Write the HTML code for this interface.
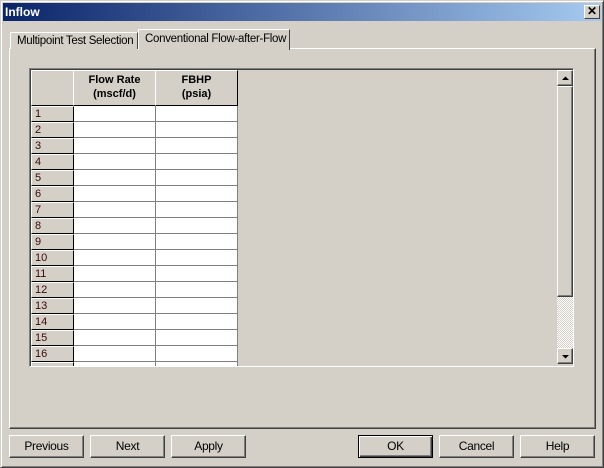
<!DOCTYPE html>
<html><head><style>
*{margin:0;padding:0;box-sizing:border-box}
body{width:604px;height:468px;background:#d4d0c8;font-family:"Liberation Sans",sans-serif;font-size:11px;position:relative;overflow:hidden}
.a{position:absolute}
.title{left:3px;top:3px;width:598px;height:18px;background:linear-gradient(90deg,#0a246a,#a6caf0);color:#fff;font-weight:bold;font-size:12px;padding:2px 0 0 2px}
.xb{right:4px;top:5px;width:16px;height:14px;background:#d4d0c8;border:1px solid;border-color:#fff #404040 #404040 #fff;font-size:12px;font-weight:bold;line-height:11px;text-align:center;color:#000}
.tab{background:#d4d0c8;border:1px solid;border-color:#fff #404040 transparent #fff;border-bottom:none;font-size:11.5px;letter-spacing:-0.3px;padding-left:6px;white-space:nowrap}
.panel{left:9px;top:48px;width:587px;height:381px;border:1px solid;border-color:#fff #404040 #404040 #fff;box-shadow:inset -1px -1px #808080}
.frame{left:29px;top:68px;width:545px;height:299px;border:1px solid;border-color:#808080 #fff #fff #808080;box-shadow:inset 1px 1px #404040;background:#d4d0c8;overflow:hidden}
.hd{background:#d4d0c8;border:1px solid;border-color:#fff #000 #000 #fff;font-weight:bold;text-align:center;line-height:14px;padding-top:2px;color:#000}
.rh{background:#d4d0c8;border:1px solid;border-color:#fff #000 #000 #fff;color:#3a0a0a;padding-left:3px;line-height:14px;font-size:11px}
.c{background:#fff;border-right:1px solid #808080;border-bottom:1px solid #808080}
.sbtn{background:#d4d0c8;border:1px solid;border-color:#fff #404040 #404040 #fff;box-shadow:inset -1px -1px #808080}
.btn{top:435px;height:23px;width:75px;background:#d4d0c8;border:1px solid;border-color:#fff #404040 #404040 #fff;box-shadow:inset -1px -1px #808080;text-align:center;line-height:20px;font-size:12px;letter-spacing:-0.3px}
</style></head><body>
<div class="a" style="left:0;top:0;width:604px;height:468px;border:1px solid;border-color:#d4d0c8 #404040 #404040 #d4d0c8;box-shadow:inset 1px 1px #fff,inset -1px -1px #808080"></div>
<div class="a title">Inflow</div>
<div class="a xb">✕</div>
<div class="a panel"></div>
<div class="a tab" style="left:10px;top:32px;width:128px;height:17px;line-height:17px">Multipoint Test Selection</div>
<div class="a tab" style="left:138px;top:29px;width:152px;height:21px;line-height:19px;z-index:2">Conventional Flow-after-Flow</div>
<div class="a frame">
 <div class="a hd" style="left:1px;top:1px;width:43px;height:36px"></div>
 <div class="a hd" style="left:43px;top:1px;width:83px;height:36px">Flow Rate<br>(mscf/d)</div>
 <div class="a hd" style="left:125px;top:1px;width:83px;height:36px">FBHP<br>(psia)</div>
 <div id="rows"></div>
 <div class="a sbtn" style="left:527px;top:1px;width:16px;height:16px"><svg width="14" height="14" style="position:absolute;left:0;top:0"><path d="M4 9h7L7.5 5.5z" fill="#000"/></svg></div>
 <div class="a sbtn" style="left:527px;top:17px;width:16px;height:211px"></div>
 <div class="a" style="left:527px;top:228px;width:16px;height:51px;background:repeating-conic-gradient(#fff 0 25%,#d4d0c8 0 50%) 0 0/2px 2px"></div>
 <div class="a sbtn" style="left:527px;top:279px;width:16px;height:16px"><svg width="14" height="14" style="position:absolute;left:0;top:0"><path d="M4 6h7L7.5 9.5z" fill="#000"/></svg></div>
</div>
<div class="a btn" style="left:9px">Previous</div>
<div class="a btn" style="left:90px">Next</div>
<div class="a btn" style="left:171px">Apply</div>
<div class="a btn" style="left:358px;border:1px solid #000;box-shadow:inset 1px 1px #fff,inset -1px -1px #404040,inset -2px -2px #808080">OK</div>
<div class="a btn" style="left:439px">Cancel</div>
<div class="a btn" style="left:520px">Help</div>
<script>
var h='';for(var i=0;i<17;i++){var t=37+i*16;
h+='<div class="a rh" style="left:1px;top:'+t+'px;width:43px;height:16px">'+(i<16?i+1:'')+'</div>';
h+='<div class="a c" style="left:44px;top:'+t+'px;width:82px;height:16px"></div>';
h+='<div class="a c" style="left:126px;top:'+t+'px;width:82px;height:16px"></div>';}
document.getElementById('rows').innerHTML=h;
</script>
</body></html>
